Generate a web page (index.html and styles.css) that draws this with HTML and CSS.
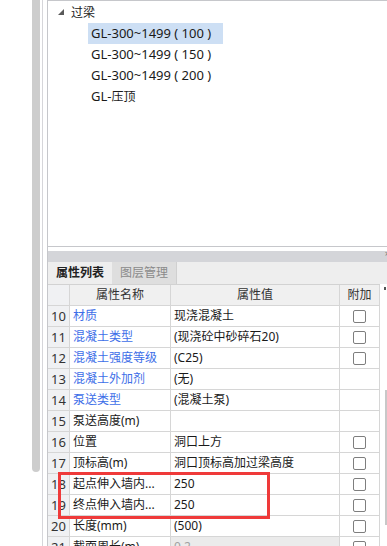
FILE: index.html
```html
<!DOCTYPE html>
<html>
<head>
<meta charset="utf-8">
<link rel="stylesheet" href="styles.css">
</head>
<body>
<div class="page">
  <div class="left-pane"></div>
  <div class="left-thumb"></div>
  <div class="gap2"></div>
  <div class="vline"></div>
  <div class="gap4"></div>
  <div class="main">
    <div class="tree">
      <div class="tree-head">
        <svg class="tri" width="6" height="6" viewBox="0 0 6 6"><polygon points="6,0 6,6 0,6" fill="#595959"/></svg>
        <span class="tree-label">过梁</span>
      </div>
      <div class="tree-item"><span class="sel">GL-300~1499 ( 100 )</span></div>
      <div class="tree-item"><span>GL-300~1499 ( 150 )</span></div>
      <div class="tree-item"><span>GL-300~1499 ( 200 )</span></div>
      <div class="tree-item"><span>GL-<b class="cjk">压顶</b></span></div>
    </div>
    <div class="titlebar"><span class="close">×</span></div>
    <div class="tabs">
      <div class="tab active">属性列表</div>
      <div class="tab inactive">图层管理</div>
    </div>
    <div class="table-wrap">
      <div class="grid">
        <div class="c num hd"></div>
        <div class="c hd center">属性名称</div>
        <div class="c hd center">属性值</div>
        <div class="c hd center">附加</div>

        <div class="c num">10</div><div class="c name link">材质</div><div class="c val">现浇混凝土</div><div class="c add"><i class="cb"></i></div>
        <div class="c num">11</div><div class="c name link">混凝土类型</div><div class="c val">(现浇砼中砂碎石20)</div><div class="c add"><i class="cb"></i></div>
        <div class="c num">12</div><div class="c name link">混凝土强度等级</div><div class="c val">(C25)</div><div class="c add"><i class="cb"></i></div>
        <div class="c num">13</div><div class="c name link">混凝土外加剂</div><div class="c val">(无)</div><div class="c add"></div>
        <div class="c num">14</div><div class="c name link">泵送类型</div><div class="c val">(混凝土泵)</div><div class="c add"></div>
        <div class="c num">15</div><div class="c name">泵送高度(m)</div><div class="c val"></div><div class="c add"></div>
        <div class="c num">16</div><div class="c name">位置</div><div class="c val">洞口上方</div><div class="c add"><i class="cb"></i></div>
        <div class="c num">17</div><div class="c name">顶标高(m)</div><div class="c val">洞口顶标高加过梁高度</div><div class="c add"><i class="cb"></i></div>
        <div class="c num">18</div><div class="c name">起点伸入墙内...</div><div class="c val">250</div><div class="c add"><i class="cb"></i></div>
        <div class="c num">19</div><div class="c name">终点伸入墙内...</div><div class="c val">250</div><div class="c add"><i class="cb"></i></div>
        <div class="c num">20</div><div class="c name">长度(mm)</div><div class="c val">(500)</div><div class="c add"><i class="cb"></i></div>
        <div class="c num">21</div><div class="c name">截面周长(m)</div><div class="c val ro">0.2</div><div class="c add"><i class="cb"></i></div>
      </div>
      <div class="vscroll">
        <div class="arrow-mark"></div>
        <div class="rthumb"></div>
      </div>
    </div>
  </div>
</div>
<div class="redbox"></div>
</body>
</html>
```

FILE: styles.css
```css
html, body {
  margin: 0;
  padding: 0;
  background: #ffffff;
}
body {
  width: 387px;
  height: 546px;
  overflow: hidden;
  position: relative;
  font-family: "Noto Sans", "Noto Sans CJK SC", sans-serif;
  font-size: 12px;
  color: #1a1a1a;
}
.page {
  display: flex;
  height: 546px;
}
.left-pane { width: 32px; flex: none; }
.left-thumb {
  width: 8px;
  height: 472px;
  flex: none;
  background: #cdcdcd;
  border-radius: 0 0 4px 4px;
}
.gap2 { width: 2px; flex: none; }
.vline { width: 1px; flex: none; background: #d6d6da; }
.gap4 { width: 4px; flex: none; }
.main {
  flex: 1;
  display: flex;
  flex-direction: column;
  border-left: 1px solid #c6c7cb;
  min-width: 0;
}
.tree {
  height: 244px;
  flex: none;
  border-top: 1px solid #c6c7cb;
  border-bottom: 1px solid #c6c7cb;
  padding-top: 1px;
  box-sizing: content-box;
}
.tree-head {
  height: 21px;
  display: flex;
  align-items: center;
  padding-left: 10px;
}
.tri { margin-right: 7px; margin-top: -2px; }
.tree-label { line-height: 21px; }
.tree-item {
  height: 21px;
  padding-left: 40px;
  display: flex;
  align-items: center;
}
.tree-item span {
  display: inline-block;
  line-height: 21px;
  padding: 0 3px;
  white-space: pre;
  font-size: 13px;
}
.tree-item .cjk { font-weight: normal; font-size: 12px; }
.tree-item .sel { background: #cddff4; padding-right: 12px; }
.titlebar {
  margin-top: 4px;
  height: 11px;
  background: #d4d5d9;
  position: relative;
  flex: none;
}
.close {
  position: absolute;
  right: -3px;
  top: -4px;
  font-size: 9px;
  color: #777;
}
.tabs {
  height: 22px;
  flex: none;
  display: flex;
  background: #eeeeee;
}
.tab {
  line-height: 22px;
  text-align: center;
  font-size: 12px;
}
.tab.active {
  width: 64px;
  font-weight: bold;
  color: #222;
}
.tab.inactive {
  width: 64px;
  background: #dedede;
  color: #8a8a8a;
  border-right: 1px solid #d0d0d0;
}
.table-wrap {
  flex: 1;
  display: flex;
  min-height: 0;
}
.grid {
  display: grid;
  grid-template-columns: 22px 101px 169px 40px;
  grid-auto-rows: 21px;
  align-content: start;
  border-top: 1px solid #d2d2d2;
}
.c {
  box-sizing: border-box;
  border-right: 1px solid #d6d6d6;
  border-bottom: 1px solid #d6d6d6;
  line-height: 20px;
  white-space: nowrap;
  overflow: hidden;
}
.hd { background: #f0f0f0; color: #333; }
.center { text-align: center; }
.num {
  background: #f0f1f3;
  text-align: center;
  color: #333;
  font-size: 13px;
}
.name { padding-left: 3px; }
.link { color: #3d6ee8; }
.val { padding-left: 3px; }
.ro { background: #ebebeb; color: #a0a0a0; }
.add {
  display: flex;
  align-items: center;
  justify-content: center;
}
.cb {
  display: block;
  width: 13px;
  height: 13px;
  box-sizing: border-box;
  border: 1px solid #7e7e7e;
  border-radius: 2px;
  background: #fff;
}
.vscroll {
  flex: 1;
  position: relative;
}
.arrow-mark {
  position: absolute;
  left: 4px;
  top: 3px;
  width: 2px;
  height: 3px;
  background: #555;
}
.rthumb {
  position: absolute;
  left: 5px;
  top: 106px;
  width: 2px;
  height: 135px;
  background: #c8c8c8;
}
.redbox {
  position: absolute;
  left: 58px;
  top: 472px;
  width: 212px;
  height: 47px;
  box-sizing: border-box;
  border: 3px solid #ef3a3a;
}
```
